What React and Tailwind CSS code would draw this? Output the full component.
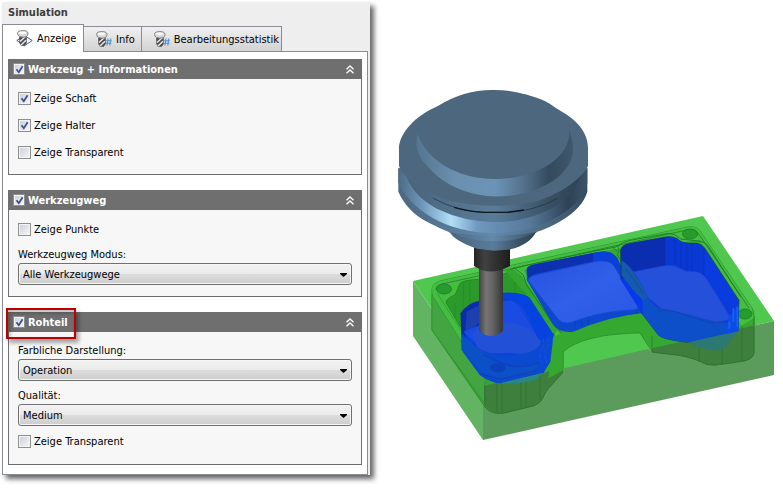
import React, { useState } from "react";

const FONT = "font-['DejaVu_Sans_Condensed','DejaVu_Sans',sans-serif]";

function Check({ id, small, defaultChecked }) {
  const [on, setOn] = useState(!!defaultChecked);
  return (
    <span className={`grid shrink-0 place-items-center ${small ? "size-3" : "size-[13px]"}`}>
      <input
        id={id}
        type="checkbox"
        checked={on}
        onChange={(e) => setOn(e.target.checked)}
        className="size-full appearance-none border border-[#8e8f8f] bg-linear-to-br from-[#c9ced6] to-[#f8f8f8] shadow-[inset_0_0_0_1px_#f4f4f4] [grid-area:1/1]"
      />
      {on && (
        <svg viewBox="0 0 9 9" className="pointer-events-none size-[9px] [grid-area:1/1]" aria-hidden="true">
          <path d="M1.500 4.200 3.800 7.200 7.600 1.200" fill="none" stroke="#3d5291" strokeWidth="1.800" />
        </svg>
      )}
    </span>
  );
}

function Option({ id, label, checked }) {
  return (
    <label htmlFor={id} className="flex h-[18px] items-center gap-[3px]">
      <Check id={id} defaultChecked={checked} />
      <span className="pt-[2px]">{label}</span>
    </label>
  );
}

function Combo({ id, label, options }) {
  return (
    <div className="flex flex-col gap-px">
      <label htmlFor={id} className="h-4 pt-px leading-4">
        {label}
      </label>
      <div className="relative">
        <select
          id={id}
          className="block h-[22px] w-full appearance-none rounded-[3px] border border-[#707070] bg-[linear-gradient(#f2f2f2,#ebebeb_48%,#dddddd_50%,#cdcdcd)] px-1 pt-[2px] shadow-[inset_0_0_0_1px_#f6f6f6]"
        >
          {options.map((o) => (
            <option key={o}>{o}</option>
          ))}
        </select>
        <svg viewBox="0 0 9 4" className="pointer-events-none absolute top-[10px] right-[4px] h-1 w-[9px]" aria-hidden="true">
          <path d="M1 0h7v1L4.500 4 1 1z" fill="#000" />
        </svg>
      </div>
    </div>
  );
}

function Section({ id, title, marked, children }) {
  return (
    <section className="relative border border-[#6f6f6f] bg-[#f7f7f7]">
      <header className="-m-px flex h-5 items-center gap-[3px] bg-[#6f6f6f] pr-2 pl-[5px] font-bold text-white">
        <Check id={id} small defaultChecked />
        <label htmlFor={id} className="flex-1 pt-[2px]">
          {title}
        </label>
        <button type="button" aria-label={`${title} einklappen`}>
          <svg viewBox="0 0 8 9" className="h-[9px] w-2" aria-hidden="true">
            <path d="M.5 4.300 4 1l3.500 3.300M.5 8.300 4 5l3.500 3.300" fill="none" stroke="#fff" strokeWidth="1.300" />
          </svg>
        </button>
      </header>
      {marked && (
        <span className="pointer-events-none absolute -top-[5px] -left-[3px] h-[31px] w-[70px] border-2 border-[#c00000] shadow-[3px_4px_4px_#0005,inset_2px_3px_4px_#0004]" />
      )}
      <div className="px-[9px] pt-[11px]">{children}</div>
    </section>
  );
}

function ToolIcon({ plane }) {
  return (
    <svg viewBox="0 0 17 17" className="size-[17px] shrink-0" aria-hidden="true">
      {plane && <path d="M.8 10.500 8.500 5.500 16.200 10.500 8.500 15.800z" fill="#f4f7fb" stroke="#45608c" />}
      <path d="M3.500 6.500V12.500L5 15.500H8.500L10.500 13V6.500z" fill="#4a4a4a" stroke="#555" strokeWidth=".6" />
      <path d="M4 11.500 9.500 6.500M5 15 10 10.300" stroke="#eee" strokeWidth="1.500" />
      <path d="M1.500 3.500Q1.500 .6 6.800 .6T12 3.500Q12 5.300 10.500 6.500 7 8 3.500 6.500 1.500 5.300 1.500 3.500z" fill="#d9d9d9" stroke="#777" strokeWidth=".9" />
      <ellipse cx="6.600" cy="2.800" rx="3.800" ry="1.400" fill="#fcfcfc" />
      {!plane && <path d="M13 7.500 12 14.500M15.800 7.500 14.800 14.500M11.200 9.800h5.600M10.800 12.300h5.600" stroke="#4b92d8" strokeWidth="1.100" />}
    </svg>
  );
}

function Tab({ active, label }) {
  return (
    <button
      type="button"
      role="tab"
      aria-selected={!!active}
      className={
        active
          ? "z-10 -mb-px flex h-7 w-[82px] items-center gap-1 border border-b-0 border-[#898c95] bg-white pl-[13px]"
          : "flex h-[25px] items-center gap-1 border border-b-0 border-l-0 border-[#898c95] bg-linear-to-b from-[#f1f1f1] to-[#d2d2d2] pr-[2px] pl-[11px] not-last:pr-[6px]"
      }
    >
      <ToolIcon plane={active} />
      <span className="pt-px">{label}</span>
    </button>
  );
}

function Scene() {
  return (
    <svg viewBox="384 0 399 489" className="min-w-0 flex-1 self-start" role="img" aria-label="Rohteil mit Werkzeug">
      <defs>
        <linearGradient id="rim">
          <stop offset="0" stopColor="#55758f" />
          <stop offset=".25" stopColor="#6b90b0" />
          <stop offset=".5" stopColor="#6c94b8" />
          <stop offset=".68" stopColor="#54728c" />
          <stop offset=".85" stopColor="#344a5d" />
          <stop offset="1" stopColor="#3f586d" />
        </linearGradient>
        <linearGradient id="flange">
          <stop offset="0" stopColor="#4c6a83" />
          <stop offset=".12" stopColor="#6c94b8" />
          <stop offset=".28" stopColor="#b2def8" />
          <stop offset=".42" stopColor="#6e98be" />
          <stop offset=".7" stopColor="#56789a" />
          <stop offset=".9" stopColor="#2e4254" />
          <stop offset="1" stopColor="#3c5367" />
        </linearGradient>
        <linearGradient id="groove">
          <stop offset="0" stopColor="#48647c" />
          <stop offset=".5" stopColor="#5a7c99" />
          <stop offset=".8" stopColor="#3a5266" />
          <stop offset="1" stopColor="#2d4151" />
        </linearGradient>
        <linearGradient id="under">
          <stop offset="0" stopColor="#4a6882" />
          <stop offset=".5" stopColor="#628aab" />
          <stop offset=".8" stopColor="#4a677f" />
          <stop offset="1" stopColor="#364c5f" />
        </linearGradient>
        <linearGradient id="steel">
          <stop offset="0" stopColor="#444" />
          <stop offset=".3" stopColor="#777476" />
          <stop offset=".6" stopColor="#626062" />
          <stop offset="1" stopColor="#353535" />
        </linearGradient>
        <linearGradient id="collet">
          <stop offset="0" stopColor="#232323" />
          <stop offset=".3" stopColor="#414141" />
          <stop offset="1" stopColor="#1c1c1c" />
        </linearGradient>
        <linearGradient id="floor" x2="1" y2="1">
          <stop offset="0" stopColor="#2850df" />
          <stop offset=".5" stopColor="#305fe9" />
          <stop offset="1" stopColor="#2957e4" />
        </linearGradient>
        <clipPath id="front">
          <path d="M483 386 774 321V375L483 440z" />
        </clipPath>
      </defs>

      {/* stock block */}
      <path d="M413 281 703 216 774 321 483 386z" fill="#50c850" />
      <path d="M413 281 483 386V440L413 336z" fill="#62b462" />
      <path d="M483 386 774 321V375L483 440z" fill="#5b9b5b" />

      {/* finished part */}
      <path
        d="M432 289Q432 284 440 281L688 227Q697 226 700 231L752 308Q754 311 754 316V353Q753 359 744 361L716 365Q707 366 699 361C684 354 664 354 652 352L640 333C617 331 583 336 563 352V372L548 389C542 396 544 402 533 406L504 413Q492 415 485 407L432 330z"
        fill="#34a831"
        stroke="#23862a"
        strokeWidth=".8"
      />
      <path d="M432 289Q432 284 440 281L688 227Q697 226 700 231L752 308 754 318 741 326 700 240 610 250 524 270 560 334 545 344 460 340 433 298z" fill="#45bd40" />
      <path d="M432 295 488 384V408L432 330z" fill="#43a542" stroke="#2f8b32" strokeWidth=".6" />
      <path
        clipPath="url(#front)"
        d="M484 370V404Q492 415 504 413L533 406C544 402 542 396 548 389L563 372V352H652C664 354 684 354 699 361Q707 366 716 365L744 361Q753 359 754 353V300z"
        fill="#3e7f3d"
      />
      <path d="M563 352C580 334 617 331 640 333L652 350 563 370z" fill="#50c850" />
      <path d="M563 368 652 348V352L563 374z" fill="#5b9b5b" />
      <g fill="none" stroke="#2b702e" strokeWidth=".7">
        <path d="M563 352V372L548 389C542 396 544 402 533 406L504 413Q492 415 485 407V382M497 383V412M502 383V412M521 378V409M526 377V407M540 375V400" />
        <path d="M652 333V352C664 354 684 354 699 361Q707 366 716 365L744 361Q753 359 754 353V316M699 340V361M722 335V364M742 326V361" />
        <path d="M436 290Q436 285 442 284L687 230Q695 229 698 233L749 308M563 352C580 334 617 331 640 333L652 352" />
        <path d="M437 293 484 366" opacity=".6" />
      </g>
      <g fill="#279b2e" stroke="#187d24" strokeWidth=".8">
        <ellipse cx="444" cy="289" rx="7.500" ry="5" />
        <ellipse cx="690" cy="234" rx="7.500" ry="5" />
        <ellipse cx="745" cy="314" rx="7" ry="5" />
      </g>

      {/* left pocket */}
      <g transform="translate(400 230) scale(.33333)">
        <path d="M180 160Q190 150 235 148L345 124 365 140 465 300 462 320 400 240 240 220 182 250V292L138 218Q138 205 165 195z" fill="#2c9a2b" stroke="#1c7d23" strokeWidth="2" />
        <path d="M165 220V265M190 160V235M210 155V225M345 126V190M375 155V198" stroke="#23862a" strokeWidth="2" />
        <path d="M182 250Q200 220 240 212L310 188Q370 184 405 212L430 240 462 298 458 385 430 428 300 460Q265 455 240 435L185 360z" fill="#0542df" />
        <path d="M182 250Q200 220 240 212V290L186 328z" fill="#0b2da8" />
        <path d="M200 245 240 225V275L195 320z" fill="#1c40b0" />
        <path d="M310 213 335 210Q360 220 375 245L420 330 425 385 240 355 190 305 240 285z" fill="#1a4be2" />
        <path d="M215 315C245 265 370 255 425 335L410 370 240 370z" fill="#2250d6" />
        <path d="M186 310Q230 375 330 377 415 370 422 335L458 310 456 385 430 428 300 460Q265 455 240 435L185 360z" fill="#0b49cf" />
        <path d="M215 335Q270 405 350 412L420 398 398 428 300 447 250 430 186 360V320z" fill="#0c50c6" />
        <ellipse cx="293" cy="413" rx="23" ry="14" fill="#0b42bb" />
        <path d="M250 375 320 405Q360 418 420 398M240 432 300 447 410 422" fill="none" stroke="#1439b4" strokeWidth="2" />
        <path d="M312 210H335Q355 220 372 250L420 330" fill="none" stroke="#0e3ac5" strokeWidth="2" />
        <path d="M430 325v25l-10 15v25l10 15M445 325v20l-10 18v22l10 18M458 325v65" fill="none" stroke="#0c4ff0" strokeWidth="4" strokeDasharray="12 5" />
        <path d="M300 460 430 428 410 446Q360 465 300 460z" fill="#2a8585" />
      </g>

      {/* middle pocket */}
      <g transform="translate(480 230) scale(.33333)">
        <path d="M72 120 100 118 135 150 235 300 220 312 150 205z" fill="#33a632" />
        <path d="M250 308 485 250 530 320 485 308Q330 312 250 365V420L205 445 220 320z" fill="#34a831" />
        <path d="M250 420V365Q310 312 480 309L515 363" fill="#50c850" stroke="#23862a" strokeWidth="2" />
        <path d="M205 445 250 420 251 404 515 345V363L400 384z" fill="none" />
        <path d="M92 118 130 108 385 55Q405 55 425 42M100 112 130 135 140 165 225 290 245 308" fill="none" stroke="#1e8127" strokeWidth="3" />
        <path d="M140 120Q140 108 165 103L355 66Q395 60 412 85L430 125 490 225 485 250Q390 258 280 305 240 310 220 285L140 150z" fill="#0d48cc" />
        <path d="M140 120Q140 108 165 103L340 69V95L165 132 145 145z" fill="#0c30af" />
        <path d="M355 66Q395 60 412 85L430 125V155L390 98 340 92V69z" fill="#0a40d7" />
        <path d="M145 152Q146 140 165 135L345 95Q385 88 400 105L472 225Q478 238 460 240 380 242 310 265L275 277Q245 285 230 262z" fill="url(#floor)" stroke="#174bd7" strokeWidth="3" />
        <path d="M285 275V298M305 267V288M325 260V282M470 240V252M185 102V127M235 90V118" stroke="#0a3cb3" strokeWidth="2" />
        <path d="M412 45Q422 60 412 75L425 95M400 55 415 65" fill="none" stroke="#1c8b2a" strokeWidth="3" />
      </g>
      <path d="M563 368.500 648 349 652 352 563 374z" fill="#5b9b5b" />

      {/* right pocket */}
      <g transform="translate(610 225) scale(.33333)">
        <path d="M25 62Q40 50 60 46L175 25Q195 25 212 42L265 48Q285 50 296 66L392 215" fill="none" stroke="#1e8127" strokeWidth="3" />
        <path d="M32 75Q34 60 55 56L170 35Q190 34 202 41 215 55 240 54L262 55Q275 58 285 70L387 226 384 318 350 330 235 352Q160 345 145 330L95 265 98 225 34 165z" fill="#0a3bdf" stroke="#17493f" strokeWidth="2" />
        <path d="M34 75Q36 60 55 56L167 36V122L52 145 34 165z" fill="#0b2db0" />
        <path d="M167 36Q190 34 202 41 215 55 240 54L262 55 280 65V150L262 140 232 140 192 122 167 122z" fill="#0a38d2" />
        <path d="M52 60V142M78 54V136M155 38V122M195 42V122M213 52V130M230 56V136M245 56V138M282 70V150" stroke="#0a2fbe" strokeWidth="2" />
        <path d="M64 142 170 121 195 123 228 139 262 141Q278 144 290 162L358 272V285L320 292 235 270 155 252 110 214z" fill="#2450da" stroke="#1c46ce" strokeWidth="2" />
        <path d="M34 105 70 138Q95 170 112 214 130 248 165 256 235 262 300 289L350 293V330L235 352Q160 345 145 330L95 265 98 225z" fill="#0c4fc8" />
        <path d="M34 105 55 122Q90 165 112 215L98 232 34 150z" fill="#165aab" />
        <path d="M34 160 98 225V268L88 252 34 168z" fill="#0639ee" />
        <path d="M145 256Q190 252 230 272L305 294 350 290M48 132 100 205" fill="none" stroke="#173f9f" strokeWidth="2" />
        <path d="M235 352 384 318 355 358Q340 378 310 376 265 370 235 352z" fill="#2c7872" />
        <path d="M355 278 386 240V318L345 328z" fill="#0c4be8" />
        <path d="M370 250v40M382 245v60M358 290v22" stroke="#1a62f4" strokeWidth="5" />
        <path d="M33 72V165" stroke="#173a73" strokeWidth="2" />
      </g>

      {/* cutter */}
      <path d="M479 268V331Q491 341 503 331V268z" fill="url(#steel)" />
      <path d="M474 246V266Q490 277 510 266V246z" fill="url(#collet)" />

      {/* tool holder */}
      <g transform="translate(394 140) scale(.33333)">
        <path d="M165 272Q178 302 250 326L300 332 350 328Q410 312 428 272z" fill="url(#groove)" />
        <path d="M165 270V277Q230 304 300 304T428 277V270z" fill="url(#under)" />
        <path d="M13 85V155Q40 215 100 246 135 264 166 277 230 288 300 287T428 276Q470 262 500 243 565 205 580 155V85z" fill="url(#under)" />
        <path d="M13 85V128Q40 190 120 236 200 279 300 279T480 236Q560 195 580 130V85z" fill="url(#flange)" />
        <path d="M38 112Q60 170 130 207 210 245 300 246T470 207Q530 175 562 105z" fill="url(#groove)" />
        <path d="M118 175Q190 214 270 217H340Q420 214 490 175" fill="none" stroke="#1f2d38" strokeWidth="2" />
        <path d="M180 202Q230 216 270 217H340L390 210" fill="none" stroke="#111a20" strokeWidth="4" />
        <path d="M15 30V78Q24 103 45 117 90 155 170 182 230 197 300 197T430 184Q510 155 550 117 575 95 582 78V30z" fill="#4d687e" />
      </g>
      <path d="M399 150C398 135 414 116 438 106Q465 89 495 90 522 90 545 103C570 114 589 128 588 150 583 178 545 197 494 196.500 445 197 404 179 399 150z" fill="#4d687e" />
      <path d="M418 134Q412 151 428 167C445 187 472 196 496 196.500 530 197 565 181 572 157Q575 145 569 130z" fill="url(#rim)" />
      <path d="M418 134C430 103 455 93 495 92S564 105 569 130C572 158 535 179 495 179S425 158 418 134z" fill="#4d687e" />
    </svg>
  );
}

export default function App() {
  return (
    <main className={`flex items-start bg-white text-[11px] leading-4 text-black ${FONT}`}>
      <aside className="mt-[2px] mr-[14px] ml-[2px] w-[368px] shrink-0 bg-[#eee] pr-[2px] shadow-[4px_4px_5px_#0009]">
        <h1 className="h-[22px] pt-[3px] pl-[6px] font-bold text-[#3c3c3c]">Simulation</h1>
        <div role="tablist" className="flex items-end">
          <Tab active label="Anzeige" />
          <Tab label="Info" />
          <Tab label="Bearbeitungsstatistik" />
        </div>
        <div className="flex flex-col gap-[15px] border border-[#898c95] bg-white px-[5px] pt-[7px] pb-[9px]">
          <Section id="tool" title="Werkzeug + Informationen">
            <div className="flex flex-col gap-[9px] pb-[13px]">
              <Option id="shaft" label="Zeige Schaft" checked />
              <Option id="holder" label="Zeige Halter" checked />
              <Option id="tool-transparent" label="Zeige Transparent" />
            </div>
          </Section>
          <Section id="path" title="Werkzeugweg">
            <div className="flex flex-col gap-2 pb-[11px]">
              <Option id="points" label="Zeige Punkte" />
              <Combo id="mode" label="Werkzeugweg Modus:" options={["Alle Werkzeugwege"]} />
            </div>
          </Section>
          <Section id="stock" title="Rohteil" marked>
            <div className="flex flex-col gap-[6px] pb-[14px]">
              <Combo id="colour" label="Farbliche Darstellung:" options={["Operation"]} />
              <Combo id="quality" label="Qualität:" options={["Medium"]} />
              <Option id="stock-transparent" label="Zeige Transparent" />
            </div>
          </Section>
        </div>
      </aside>
      <Scene />
    </main>
  );
}
